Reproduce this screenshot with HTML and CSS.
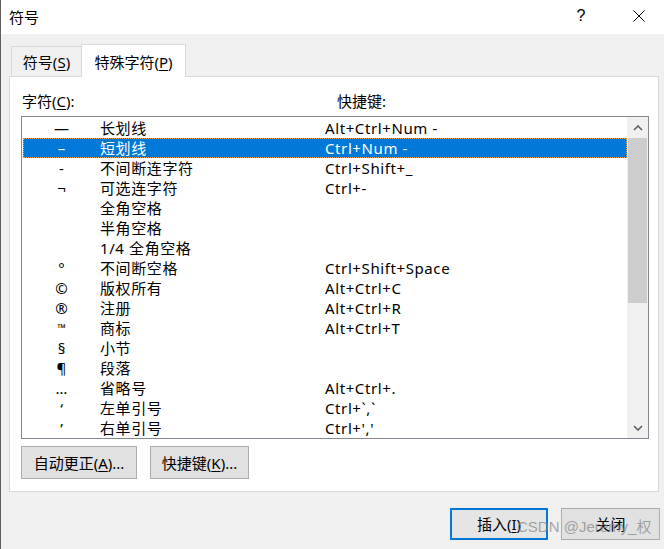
FILE: index.html
```html
<!DOCTYPE html>
<html lang="zh-CN">
<head>
<meta charset="utf-8">
<title>符号</title>
<link rel="stylesheet" href="styles.css">
</head>
<body>
<div class="window">
  <div class="titlebar">
    <span class="title">符号</span>
    <span class="tb-btn help">?</span>
    <span class="tb-btn close">
      <svg width="12" height="12" viewBox="0 0 12 12"><path d="M0.5 0.5 L11.5 11.5 M11.5 0.5 L0.5 11.5" stroke="#000" stroke-width="1" fill="none"/></svg>
    </span>
  </div>
  <div class="content">
    <div class="tabs">
      <div class="tab">符号(<u>S</u>)</div>
      <div class="tab active">特殊字符(<u>P</u>)</div>
    </div>
    <div class="panel">
      <div class="labels">
        <span class="lbl-char">字符(<u>C</u>):</span>
        <span class="lbl-key">快捷键:</span>
      </div>
      <div class="listbox">
        <div class="rows">
          <div class="row"><span class="ch">—</span><span>长划线</span><span>Alt+Ctrl+Num -</span></div>
          <div class="row selected"><span class="ch">–</span><span>短划线</span><span>Ctrl+Num -</span></div>
          <div class="row"><span class="ch small">-</span><span>不间断连字符</span><span>Ctrl+Shift+_</span></div>
          <div class="row"><span class="ch">¬</span><span>可选连字符</span><span>Ctrl+-</span></div>
          <div class="row"><span class="ch"></span><span>全角空格</span><span></span></div>
          <div class="row"><span class="ch"></span><span>半角空格</span><span></span></div>
          <div class="row"><span class="ch"></span><span>1/4 全角空格</span><span></span></div>
          <div class="row"><span class="ch">°</span><span>不间断空格</span><span>Ctrl+Shift+Space</span></div>
          <div class="row"><span class="ch">©</span><span>版权所有</span><span>Alt+Ctrl+C</span></div>
          <div class="row"><span class="ch">®</span><span>注册</span><span>Alt+Ctrl+R</span></div>
          <div class="row"><span class="ch tm">™</span><span>商标</span><span>Alt+Ctrl+T</span></div>
          <div class="row"><span class="ch">§</span><span>小节</span><span></span></div>
          <div class="row"><span class="ch">¶</span><span>段落</span><span></span></div>
          <div class="row"><span class="ch">…</span><span>省略号</span><span>Alt+Ctrl+.</span></div>
          <div class="row"><span class="ch">‘</span><span>左单引号</span><span>Ctrl+`,`</span></div>
          <div class="row"><span class="ch">’</span><span>右单引号</span><span>Ctrl+','</span></div>
        </div>
        <div class="scrollbar">
          <div class="sb-arrow">
            <svg width="10" height="6" viewBox="0 0 10 6"><path d="M1 5 L5 1 L9 5" stroke="#606060" stroke-width="1.6" fill="none"/></svg>
          </div>
          <div class="sb-thumb"></div>
          <div class="sb-track"></div>
          <div class="sb-arrow">
            <svg width="10" height="6" viewBox="0 0 10 6"><path d="M1 1 L5 5 L9 1" stroke="#606060" stroke-width="1.6" fill="none"/></svg>
          </div>
        </div>
      </div>
      <div class="panel-buttons">
        <div class="btn btn-auto">自动更正(<u>A</u>)...</div>
        <div class="btn btn-key">快捷键(<u>K</u>)...</div>
      </div>
    </div>
  </div>
  <div class="footer">
    <div class="btn btn-insert default">插入(<u>I</u>)</div>
    <div class="btn btn-close">关闭</div>
    <span class="watermark">CSDN @Jeremy_权</span>
  </div>
</div>
</body>
</html>
```

FILE: styles.css
```css
* { box-sizing: border-box; }

html, body {
  margin: 0;
  padding: 0;
}

body {
  width: 664px;
  height: 549px;
  overflow: hidden;
  background: #f0f0f0;
  font-family: "Noto Sans", "Noto Sans CJK SC", sans-serif;
  font-size: 15px;
  color: #000;
}

u { text-decoration: underline; text-underline-offset: 2px; }

.window {
  position: relative;
  height: 549px;
  border-left: 1px solid #5f5f5f;
  display: flex;
  flex-direction: column;
}

.titlebar {
  height: 34px;
  background: #fff;
  display: flex;
  align-items: center;
  padding-left: 8px;
  line-height: 20px;
  flex: none;
}

.title { flex: 1; }

.tb-btn {
  width: 46px;
  height: 34px;
  display: flex;
  align-items: center;
  justify-content: center;
}

.help {
  font-family: "Liberation Sans", sans-serif;
  font-size: 16px;
  margin-right: 12px;
  padding-bottom: 3px;
}

.close { margin-right: 2px; padding-bottom: 3px; }

.content {
  padding: 10px 5px 0 8px;
  flex: none;
}

.tabs {
  display: flex;
  align-items: flex-end;
  height: 32px;
  margin-left: 2px;
  position: relative;
  z-index: 1;
}

.tab {
  width: 70px;
  height: 30px;
  border: 1px solid #d9d9d9;
  border-right: none;
  border-bottom: none;
  background: #f0f0f0;
  text-align: center;
  line-height: 20px;
  padding-top: 5px;
}

.tab.active {
  width: 105px;
  height: 33px;
  margin-bottom: -1px;
  background: #fff;
  border-right: 1px solid #d9d9d9;
  padding-top: 7px;
}

.panel {
  height: 416px;
  background: #fff;
  border: 1px solid #d9d9d9;
  padding: 14px 9px 12px 11px;
  display: flex;
  flex-direction: column;
}

.labels {
  height: 20px;
  line-height: 20px;
  display: flex;
  padding-left: 1px;
}

.lbl-char { width: 315px; }

.listbox {
  margin-top: 5px;
  height: 323px;
  border: 1px solid #828790;
  display: flex;
  overflow: hidden;
}

.rows {
  flex: 1;
  padding: 1px 0 0 1px;
  overflow: hidden;
}

.row {
  height: 20px;
  line-height: 20px;
  display: grid;
  grid-template-columns: 77px 225px 1fr;
  white-space: nowrap;
  letter-spacing: 0.6px;
}

.row .ch {
  text-align: center;
  letter-spacing: 0;
}

.row .ch.tm { font-size: 11px; }

.row.selected {
  background: #0078d7;
  color: #fff;
  outline: 1px dotted #f5a04b;
  outline-offset: -1px;
}

.scrollbar {
  width: 21px;
  background: #f0f0f0;
  display: flex;
  flex-direction: column;
}

.sb-arrow {
  height: 21px;
  display: flex;
  align-items: center;
  justify-content: center;
  flex: none;
}

.sb-thumb {
  height: 165px;
  margin: 0 1px;
  background: #cdcdcd;
  flex: none;
}

.sb-track { flex: 1; }

.panel-buttons {
  margin-top: 7px;
  display: flex;
  gap: 13px;
}

.btn {
  height: 33px;
  background: #e1e1e1;
  border: 1px solid #adadad;
  display: flex;
  align-items: center;
  justify-content: center;
  line-height: 20px;
  white-space: nowrap;
}

.btn-auto { width: 116px; }
.btn-key { width: 99px; }

.footer {
  position: relative;
  display: flex;
  justify-content: flex-end;
  gap: 13px;
  padding: 16px 4px 0 0;
}

.btn-insert { width: 98px; height: 32px; }
.btn-close { width: 99px; height: 32px; }

.btn.default {
  border: 2px solid #0078d7;
  background: #e5e5e5;
}

.watermark {
  position: absolute;
  z-index: 2;
  left: 516px;
  top: 26px;
  font-family: "Liberation Sans", "Noto Sans CJK SC", sans-serif;
  font-size: 15px;
  line-height: 18px;
  color: rgba(130, 130, 130, 0.7);
  white-space: nowrap;
}
```
